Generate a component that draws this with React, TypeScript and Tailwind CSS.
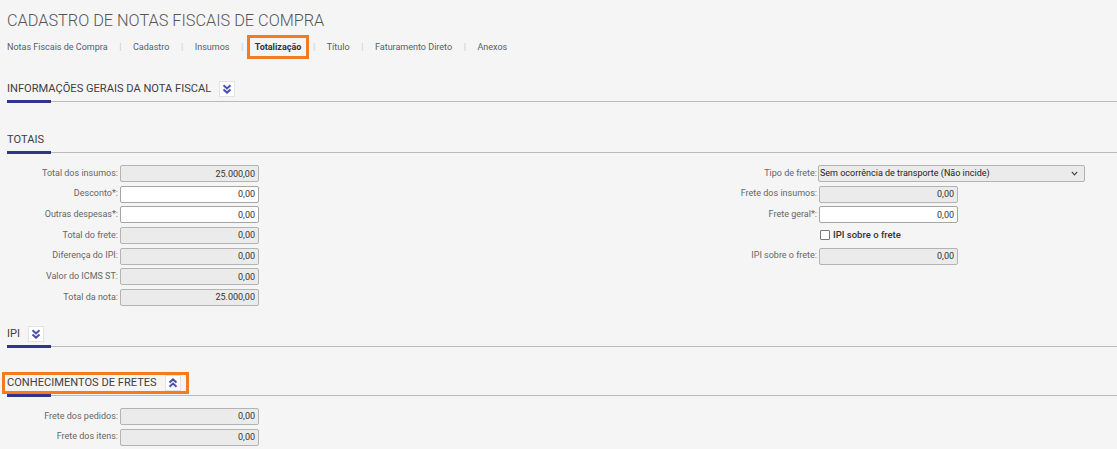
import React from 'react';

const tabs = ['Notas Fiscais de Compra', 'Cadastro', 'Insumos', 'Totalização', 'Título', 'Faturamento Direto', 'Anexos'];

function DoubleChevron({ up = false }: { up?: boolean }) {
  return (
    <svg width="10" height="10" viewBox="0 0 10 10" className={up ? 'rotate-180' : ''}>
      <polyline points="1.5,1.2 5,4.4 8.5,1.2" fill="none" stroke="#4a4fae" strokeWidth="2" />
      <polyline points="1.5,5.4 5,8.6 8.5,5.4" fill="none" stroke="#4a4fae" strokeWidth="2" />
    </svg>
  );
}

function SectionHeader({ title, toggle, highlight }: { title: string; toggle?: 'up' | 'down'; highlight?: boolean }) {
  const head = (
    <div className="flex items-center gap-[8px] h-[16px]">
      <span className="text-[11.1px] leading-[16px] text-[#404040]">{title}</span>
      {toggle && (
        <span className="w-[16px] h-[16px] bg-white border border-[#e3e3e3] flex items-center justify-center">
          <DoubleChevron up={toggle === 'up'} />
        </span>
      )}
    </div>
  );
  return (
    <div className="ml-[7px]">
      {highlight ? (
        <div className="flex">
          <div className="-ml-[5px] -my-[3px] pl-[2px] pr-[5px] border-[3px] border-[#f47c20]">{head}</div>
        </div>
      ) : (
        head
      )}
      <div className="flex items-center h-[3px] mt-[3px]">
        <div className="w-[44px] h-[3px] bg-[#31348c]" />
        <div className="flex-1 h-px bg-[#bababa]" />
      </div>
    </div>
  );
}

function Field({ label, value, editable }: { label: string; value: string; editable?: boolean }) {
  return (
    <div className="flex items-center h-[17px]">
      <span className="w-[120px] pr-[2px] text-right text-[9px] text-[#666] whitespace-nowrap">{label}</span>
      <input
        readOnly
        value={value}
        className={`w-[139px] h-[17px] rounded-[2px] border px-[3px] text-right text-[9px] text-[#333] outline-none ${
          editable ? 'bg-white border-[#a5a5a5]' : 'bg-[#ebebeb] border-[#b3b3b3]'
        }`}
      />
    </div>
  );
}

export default function App() {
  return (
    <div className="w-[1117px] h-[449px] overflow-hidden bg-[#f5f5f5] font-['Roboto','Liberation_Sans',sans-serif]">
      <div className="pt-[11px] pl-[7px] text-[16.3px] leading-[20px] font-light text-[#555]">
        CADASTRO DE NOTAS FISCAIS DE COMPRA
      </div>

      <div className="mt-[10px] ml-[7px] flex items-center h-[12px] text-[9px] leading-[12px]">
        {tabs.map((t, i) => (
          <React.Fragment key={t}>
            {i > 0 && <span className="mx-[11.6px] text-[#c8c8c8]">|</span>}
            {t === 'Totalização' ? (
              <span className="-mx-[8px] -my-[6px] h-[24px] px-[5px] inline-flex items-center border-[3px] border-[#f47c20] font-bold text-[#333]">
                {t}
              </span>
            ) : (
              <span className="text-[#56606a]">{t}</span>
            )}
          </React.Fragment>
        ))}
      </div>

      <div className="mt-[28px]">
        <SectionHeader title="INFORMAÇÕES GERAIS DA NOTA FISCAL" toggle="down" />
      </div>

      <div className="mt-[29px]">
        <SectionHeader title="TOTAIS" />
      </div>

      <div className="mt-[11px] flex">
        <div className="w-[259px] flex flex-col gap-[3.67px]">
          <Field label="Total dos insumos:" value="25.000,00" />
          <Field label="Desconto*:" value="0,00" editable />
          <Field label="Outras despesas*:" value="0,00" editable />
          <Field label="Total do frete:" value="0,00" />
          <Field label="Diferença do IPI:" value="0,00" />
          <Field label="Valor do ICMS ST:" value="0,00" />
          <Field label="Total da nota:" value="25.000,00" />
        </div>
        <div className="ml-[440px] flex flex-col gap-[3.67px]">
          <div className="flex items-center h-[17px]">
            <span className="w-[119px] pr-[1px] text-right text-[9px] text-[#666]">Tipo de frete:</span>
            <div className="w-[267px] h-[17px] rounded-[2px] border border-[#b3b3b3] bg-[#ebebeb] flex items-center justify-between pl-[1px] pr-[6px]">
              <span className="text-[9px] text-[#222]">Sem ocorrência de transporte (Não incide)</span>
              <svg width="7" height="5" viewBox="0 0 7 5">
                <polyline points="0.8,0.8 3.5,3.8 6.2,0.8" fill="none" stroke="#444" strokeWidth="1.2" />
              </svg>
            </div>
          </div>
          <Field label="Frete dos insumos:" value="0,00" />
          <Field label="Frete geral*:" value="0,00" editable />
          <div className="flex items-center h-[17px]">
            <span className="w-[121px]" />
            <span className="w-[10px] h-[10px] rounded-[1px] border border-[#777] bg-white" />
            <span className="ml-[3px] text-[9.5px] font-medium text-[#333]">IPI sobre o frete</span>
          </div>
          <Field label="IPI sobre o frete:" value="0,00" />
        </div>
      </div>

      <div className="mt-[20px]">
        <SectionHeader title="IPI" toggle="down" />
      </div>

      <div className="mt-[27px]">
        <SectionHeader title="CONHECIMENTOS DE FRETES" toggle="up" highlight />
      </div>

      <div className="mt-[11px] w-[259px] flex flex-col gap-[3.67px]">
        <Field label="Frete dos pedidos:" value="0,00" />
        <Field label="Frete dos itens:" value="0,00" />
      </div>
    </div>
  );
}
